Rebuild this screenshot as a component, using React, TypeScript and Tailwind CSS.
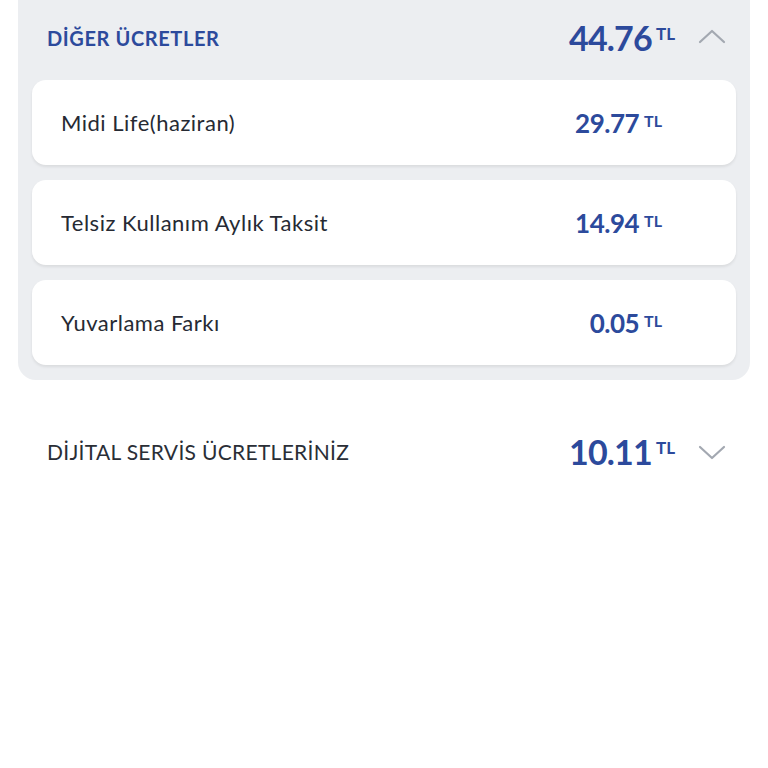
import React from 'react';

interface Fee {
  label: string;
  amount: string;
}

const fees: Fee[] = [
  { label: 'Midi Life(haziran)', amount: '29.77' },
  { label: 'Telsiz Kullanım Aylık Taksit', amount: '14.94' },
  { label: 'Yuvarlama Farkı', amount: '0.05' },
];

function ChevronUp() {
  return (
    <svg className="w-[28px] h-[28px] text-[#a3a8b1]" fill="none" stroke="currentColor" viewBox="0 0 28 28">
      <path strokeLinecap="round" strokeLinejoin="round" strokeWidth={2.2} d="M2 18L14 7l12 11" />
    </svg>
  );
}

function ChevronDown() {
  return (
    <svg className="w-[28px] h-[28px] text-[#a3a8b1]" fill="none" stroke="currentColor" viewBox="0 0 28 28">
      <path strokeLinecap="round" strokeLinejoin="round" strokeWidth={2.2} d="M2 9l12 11L26 9" />
    </svg>
  );
}

function Amount({ value, big }: { value: string; big?: boolean }) {
  return (
    <div className="flex items-start text-[#2c4a9c] font-bold">
      <span className={big ? 'text-[34px] leading-[40px] tracking-[-0.8px]' : 'text-[26px] leading-[32px] tracking-[-0.5px]'}>
        {value}
      </span>
      <span className={big ? 'text-[17px] leading-[17px] mt-[7px] ml-[4px]' : 'text-[16px] leading-[16px] mt-[6px] ml-[5px]'}>
        TL
      </span>
    </div>
  );
}

function App() {
  return (
    <div className="w-[768px] h-[768px] bg-white" style={{ fontFamily: 'Lato, "Noto Sans", sans-serif' }}>
      <div className="px-[18px]">
        {/* Other fees */}
        <div className="bg-[#eceef1] rounded-b-[18px] px-[14px] pb-[15px]">
          <div className="h-[80px] flex items-center justify-between pl-[15px] pr-[10px] pb-[4px]">
            <span className="text-[20px] font-bold text-[#2c4a9c] tracking-[0.6px]">DİĞER ÜCRETLER</span>
            <div className="flex items-center gap-[23px]">
              <Amount value="44.76" big />
              <ChevronUp />
            </div>
          </div>
          <div className="flex flex-col gap-[15px]">
            {fees.map((fee) => (
              <div
                key={fee.label}
                className="h-[85px] bg-white rounded-[14px] shadow-[0_2px_3px_rgba(0,0,0,0.08)] flex items-center justify-between pl-[29px] pr-[74px]"
              >
                <span className="text-[22px] text-[#262a33] font-normal tracking-[0.5px]">{fee.label}</span>
                <Amount value={fee.amount} />
              </div>
            ))}
          </div>
        </div>

        {/* Digital services */}
        <div className="h-[142px] flex items-center justify-between pl-[29px] pr-[24px] pt-[2px]">
          <span className="text-[21px] font-normal text-[#2a2e36] tracking-[0.3px]">DİJİTAL SERVİS ÜCRETLERİNİZ</span>
          <div className="flex items-center gap-[23px]">
            <Amount value="10.11" big />
            <ChevronDown />
          </div>
        </div>
      </div>
    </div>
  );
}

export default App;
